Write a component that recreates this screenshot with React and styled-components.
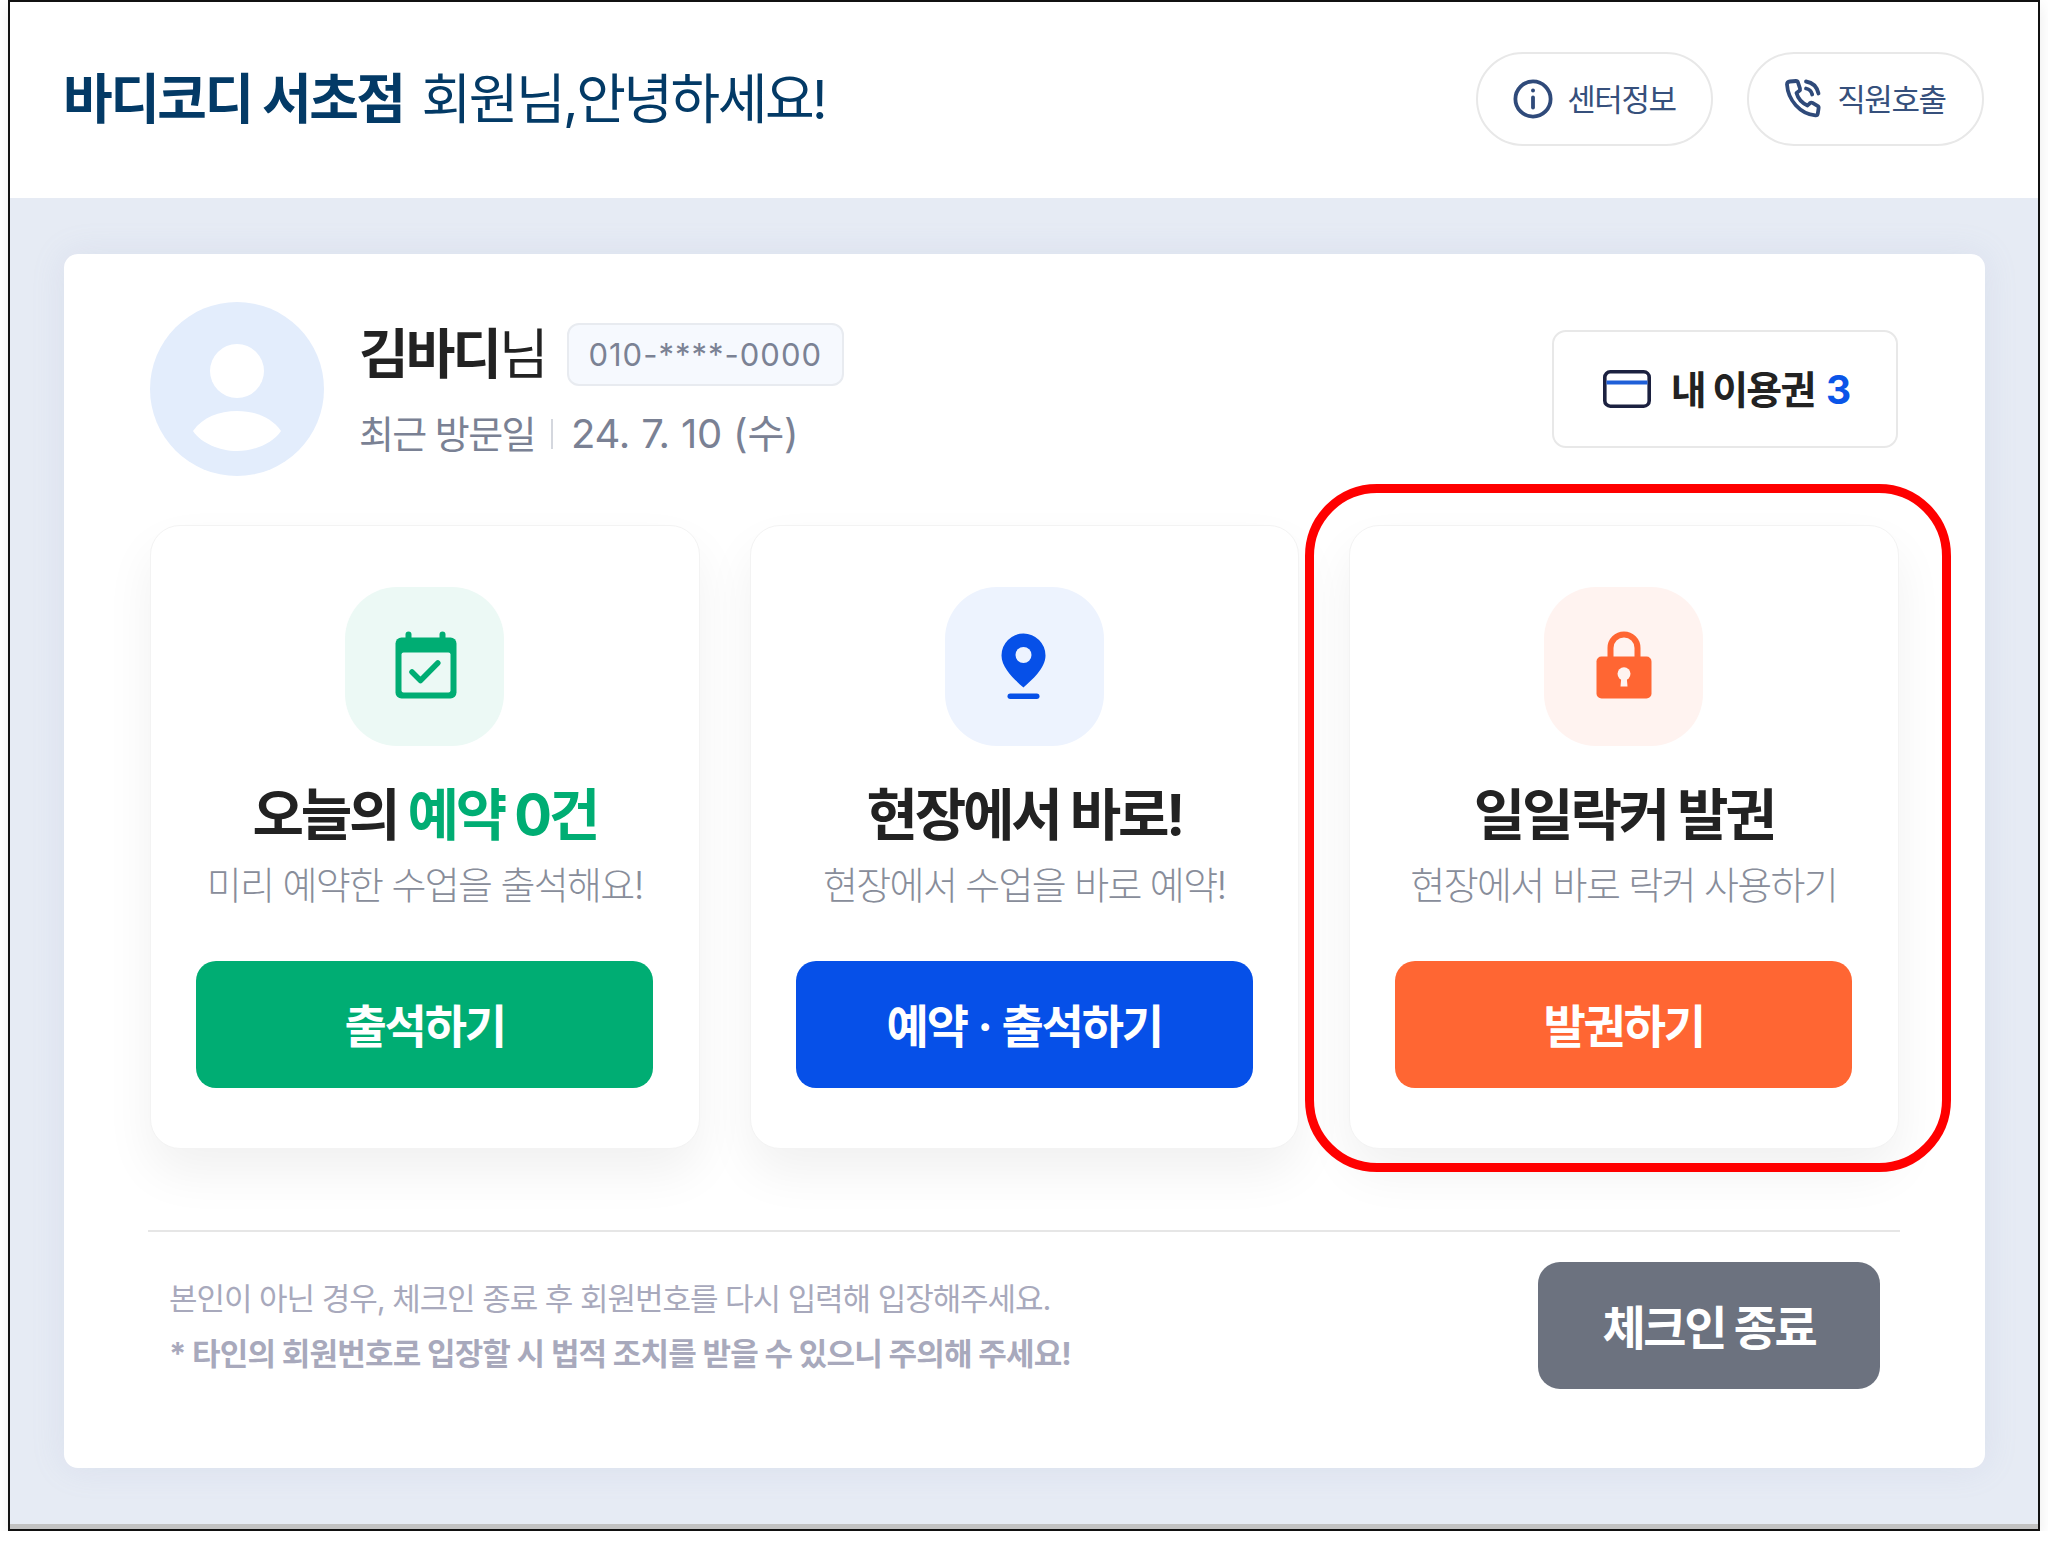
import React from "react";
import styled, { createGlobalStyle } from "styled-components";

const GlobalStyle = createGlobalStyle`
  html, body {
    margin: 0;
    padding: 0;
    background: #fff;
  }
  * {
    box-sizing: border-box;
  }
  body {
    font-family: Inter, "Noto Sans CJK KR", sans-serif;
  }
`;

const Frame = styled.div`
  width: 2032px;
  height: 1531px;
  margin-left: 8px;
  border: 2px solid #111;
  display: flex;
  flex-direction: column;
  background: #e6ebf4;
  box-shadow: 0 6px 14px rgba(0, 0, 0, 0.08);
`;

const Header = styled.header`
  height: 196px;
  padding: 0 54px 2px 54px;
  background: #fff;
  display: flex;
  align-items: center;
  justify-content: space-between;
`;

const Greeting = styled.h1`
  margin: 2px 0 0 -1px;
  font-size: 54px;
  font-weight: 400;
  letter-spacing: -2.5px;
  line-height: 64px;
  color: #033a66;
  b {
    font-weight: 700;
    margin-right: 18px;
  }
`;

const HeaderActions = styled.div`
  display: flex;
  gap: 34px;
`;

const PillButton = styled.button`
  width: 237px;
  height: 94px;
  padding: 0 0 3px;
  border: 2px solid #e8e8e8;
  border-radius: 47px;
  background: #fff;
  display: flex;
  align-items: center;
  justify-content: center;
  gap: 14px;
  font-family: inherit;
  font-size: 31px;
  letter-spacing: -1.4px;
  color: #36507c;
  svg {
    margin-top: 3px;
  }
`;

const Main = styled.main`
  flex: 1;
  padding: 56px 53px 56px 54px;
`;

const BottomStrip = styled.div`
  height: 5px;
  background: #c2c2c2;
`;

const Panel = styled.section`
  height: 1214px;
  padding: 48px 87px 0 86px;
  background: #fff;
  border-radius: 14px;
  box-shadow: 0 0 34px rgba(140, 155, 195, 0.14);
`;

const Profile = styled.div`
  display: flex;
  align-items: center;
  height: 174px;
`;

const Avatar = styled.svg`
  width: 174px;
  height: 174px;
  flex: none;
`;

const ProfileInfo = styled.div`
  margin-left: 35px;
  flex: 1;
  display: flex;
  flex-direction: column;
  gap: 25px;
`;

const NameRow = styled.div`
  display: flex;
  align-items: center;
  gap: 21px;
`;

const Name = styled.span`
  font-size: 54px;
  line-height: 64px;
  letter-spacing: -3px;
  color: #222;
  b {
    font-weight: 700;
  }
`;

const PhoneChip = styled.span`
  width: 277px;
  height: 63px;
  border: 2px solid #e8ebf0;
  border-radius: 12px;
  background: #f6f9fe;
  display: flex;
  align-items: center;
  justify-content: center;
  font-size: 31px;
  letter-spacing: 1px;
  color: #7b8294;
`;

const VisitRow = styled.div`
  display: flex;
  align-items: center;
  font-size: 38px;
  line-height: 44px;
  letter-spacing: -1.6px;
  color: #7a8194;
`;

const VisitSep = styled.i`
  width: 2px;
  height: 30px;
  margin: 0 18px 0 16px;
  background: #d4d7de;
`;

const VisitDate = styled.span`
  font-size: 40px;
  letter-spacing: -0.2px;
`;

const TicketButton = styled.button`
  width: 346px;
  height: 118px;
  padding: 0 0 5px;
  border: 2px solid #e8e8e8;
  border-radius: 14px;
  background: #fff;
  display: flex;
  align-items: center;
  justify-content: center;
  gap: 20px;
  font-family: inherit;
  font-size: 39px;
  font-weight: 700;
  letter-spacing: -1.8px;
  color: #222;
  svg {
    margin: 5px 0 0 2px;
  }
  em {
    font-style: normal;
    color: #0a55e8;
    margin-left: 4px;
  }
`;

const CardRow = styled.div`
  margin-top: 49px;
  display: grid;
  grid-template-columns: repeat(3, 549.5px);
  gap: 50px;
`;

const Card = styled.article`
  position: relative;
  height: 624px;
  padding: 61px 46px 0;
  border: 1px solid #f3f3f3;
  border-radius: 30px;
  background: #fff;
  box-shadow: 0 24px 50px rgba(0, 0, 0, 0.06);
  display: flex;
  flex-direction: column;
  align-items: center;
`;

const IconBox = styled.div`
  width: 159px;
  height: 159px;
  border-radius: 52px;
  background: ${(p) => p.$bg};
  display: flex;
  align-items: center;
  justify-content: center;
  svg {
    width: 80px;
    height: 80px;
  }
`;

const CardTitle = styled.h2`
  margin: 36px 0 0;
  font-size: 56px;
  font-weight: 700;
  line-height: 66px;
  letter-spacing: -3.2px;
  color: #222;
  em {
    font-style: normal;
    color: #00ad73;
  }
`;

const CardText = styled.p`
  margin: 15px 0 0;
  font-size: 38px;
  font-weight: 300;
  line-height: 44px;
  letter-spacing: -1.65px;
  color: #888d9a;
`;

const CardButton = styled.button`
  width: 457px;
  height: 127px;
  margin-top: 54px;
  padding: 0 0 3px;
  border: 0;
  border-radius: 20px;
  background: ${(p) => p.$bg};
  font-family: inherit;
  font-size: 46px;
  font-weight: 700;
  letter-spacing: -2.2px;
  word-spacing: 2px;
  color: #fff;
`;

const Highlight = styled.div`
  position: absolute;
  top: -42px;
  left: -45px;
  width: 646px;
  height: 688px;
  border: 9px solid #f00;
  border-radius: 72px;
  pointer-events: none;
`;

const Divider = styled.hr`
  margin: 81px -2px 0;
  border: 0;
  height: 2px;
  background: #e6e6e6;
`;

const Footer = styled.div`
  margin-top: 30px;
  padding: 0 18px 0 19px;
  display: flex;
  align-items: center;
  justify-content: space-between;
`;

const Notes = styled.div`
  padding-top: 2px;
  display: flex;
  flex-direction: column;
  gap: 19px;
  font-size: 31px;
  line-height: 36px;
  letter-spacing: -1.05px;
  color: #a8a9bc;
  b {
    font-weight: 700;
    letter-spacing: -0.8px;
  }
`;

const ExitButton = styled.button`
  width: 342px;
  height: 127px;
  padding: 0 0 2px;
  border: 0;
  border-radius: 22px;
  background: #6c727f;
  font-family: inherit;
  font-size: 47px;
  font-weight: 700;
  letter-spacing: -2.4px;
  color: #fff;
`;

const InfoIcon = () => (
  <svg width="40" height="40" viewBox="0 0 40 40" fill="none" stroke="#2f4a7a" strokeWidth="3.8" strokeLinecap="round">
    <circle cx="20" cy="20" r="17.6" />
    <path d="M20 18.500v10" />
    <circle cx="20" cy="11.500" r="2" fill="#2f4a7a" stroke="none" />
  </svg>
);

const PhoneIcon = () => (
  <svg width="38" height="42" viewBox="0 0 38 42" fill="none" stroke="#2f4a7a" strokeWidth="3.8" strokeLinecap="round" strokeLinejoin="round">
    <path d="M5 3.500 11 3c1 0 1.700.6 2 1.500l2 6c.3 1-.1 1.900-.9 2.500l-2.600 2c1.500 5.500 5.500 10 11 12.500l2.300-2.200c.8-.7 1.800-.9 2.700-.4l5 2.900c.9.5 1.300 1.400 1.100 2.400l-.8 5.300c-.2 1.200-1.200 2-2.400 1.900C15 36 3 22 2 6.500 2 5 3 3.700 5 3.500Z" />
    <path d="M21 3.500c6.500 1 11 5.500 12.500 12" />
    <path d="M21 10.500c3 .6 5.500 3 6.200 6" />
  </svg>
);

const TicketIcon = () => (
  <svg width="48" height="38" viewBox="0 0 48 38">
    <rect x="1.800" y="1.800" width="44.400" height="34.400" rx="5.500" fill="none" stroke="#1c2140" strokeWidth="3.600" />
    <rect x="3.500" y="10.500" width="41" height="4" fill="#1f5fd8" />
  </svg>
);

const CalendarIcon = () => (
  <svg viewBox="0 0 80 80">
    <rect x="20.500" y="4.500" width="6" height="12" rx="3" fill="#00ad73" />
    <rect x="54.500" y="4.500" width="6" height="12" rx="3" fill="#00ad73" />
    <rect x="10.500" y="10.500" width="61" height="61" rx="6" fill="#00ad73" />
    <rect x="16.500" y="25.500" width="49" height="40" rx="2" fill="#ecf9f5" />
    <path d="M27 45l8.500 8.500L52.800 36" fill="none" stroke="#00ad73" strokeWidth="5.500" strokeLinecap="round" strokeLinejoin="round" />
  </svg>
);

const PinIcon = () => (
  <svg viewBox="0 0 80 80">
    <path d="M39.500 6.500a22 22 0 0 1 22 22c0 12.500-13.500 24.500-22 32-8.500-7.500-22-19.500-22-32a22 22 0 0 1 22-22Z" fill="#0650e8" />
    <circle cx="39.500" cy="28" r="8" fill="#edf3fe" />
    <rect x="23.500" y="66.500" width="32" height="5.500" rx="2.750" fill="#0650e8" />
  </svg>
);

const LockIcon = () => (
  <svg viewBox="0 0 80 80">
    <path d="M26.500 32V21a13.500 13.500 0 0 1 27 0v11" fill="none" stroke="#ff6633" strokeWidth="6" />
    <rect x="12.500" y="29.500" width="55" height="42" rx="5" fill="#ff6633" />
    <circle cx="40" cy="46.800" r="6.500" fill="#fff3f0" />
    <path d="M37.500 48h5l1 11.500h-7Z" fill="#fff3f0" />
  </svg>
);

const App = () => {
  return (
    <>
      <GlobalStyle />
      <Frame>
        <Header>
          <Greeting>
            <b>바디코디 서초점</b>회원님,안녕하세요!
          </Greeting>
          <HeaderActions>
            <PillButton>
              <InfoIcon />
              센터정보
            </PillButton>
            <PillButton>
              <PhoneIcon />
              직원호출
            </PillButton>
          </HeaderActions>
        </Header>
        <Main>
          <Panel>
            <Profile>
              <Avatar viewBox="0 0 174 174">
                <circle cx="87" cy="87" r="87" fill="#e3edfc" />
                <circle cx="87" cy="69" r="27" fill="#fff" />
                <path d="M43 129c10-14 26-20 44-20s34 6 44 20c-8 12-26 20-44 20s-36-8-44-20Z" fill="#fff" />
              </Avatar>
              <ProfileInfo>
                <NameRow>
                  <Name>
                    <b>김바디</b>님
                  </Name>
                  <PhoneChip>010-****-0000</PhoneChip>
                </NameRow>
                <VisitRow>
                  최근 방문일
                  <VisitSep />
                  <VisitDate>24. 7. 10 (수)</VisitDate>
                </VisitRow>
              </ProfileInfo>
              <TicketButton>
                <TicketIcon />
                <span>
                  내 이용권 <em>3</em>
                </span>
              </TicketButton>
            </Profile>

            <CardRow>
              <Card>
                <IconBox $bg="#ecf9f5">
                  <CalendarIcon />
                </IconBox>
                <CardTitle>
                  오늘의 <em>예약 0건</em>
                </CardTitle>
                <CardText>미리 예약한 수업을 출석해요!</CardText>
                <CardButton $bg="#00ad73">출석하기</CardButton>
              </Card>
              <Card>
                <IconBox $bg="#edf3fe">
                  <PinIcon />
                </IconBox>
                <CardTitle>현장에서 바로!</CardTitle>
                <CardText>현장에서 수업을 바로 예약!</CardText>
                <CardButton $bg="#0650e8">예약 · 출석하기</CardButton>
              </Card>
              <Card>
                <IconBox $bg="#fff3f0">
                  <LockIcon />
                </IconBox>
                <CardTitle>일일락커 발권</CardTitle>
                <CardText>현장에서 바로 락커 사용하기</CardText>
                <CardButton $bg="#ff6633">발권하기</CardButton>
                <Highlight />
              </Card>
            </CardRow>

            <Divider />

            <Footer>
              <Notes>
                <span>본인이 아닌 경우, 체크인 종료 후 회원번호를 다시 입력해 입장해주세요.</span>
                <b>* 타인의 회원번호로 입장할 시 법적 조치를 받을 수 있으니 주의해 주세요!</b>
              </Notes>
              <ExitButton>체크인 종료</ExitButton>
            </Footer>
          </Panel>
        </Main>
        <BottomStrip />
      </Frame>
    </>
  );
};

export default App;
